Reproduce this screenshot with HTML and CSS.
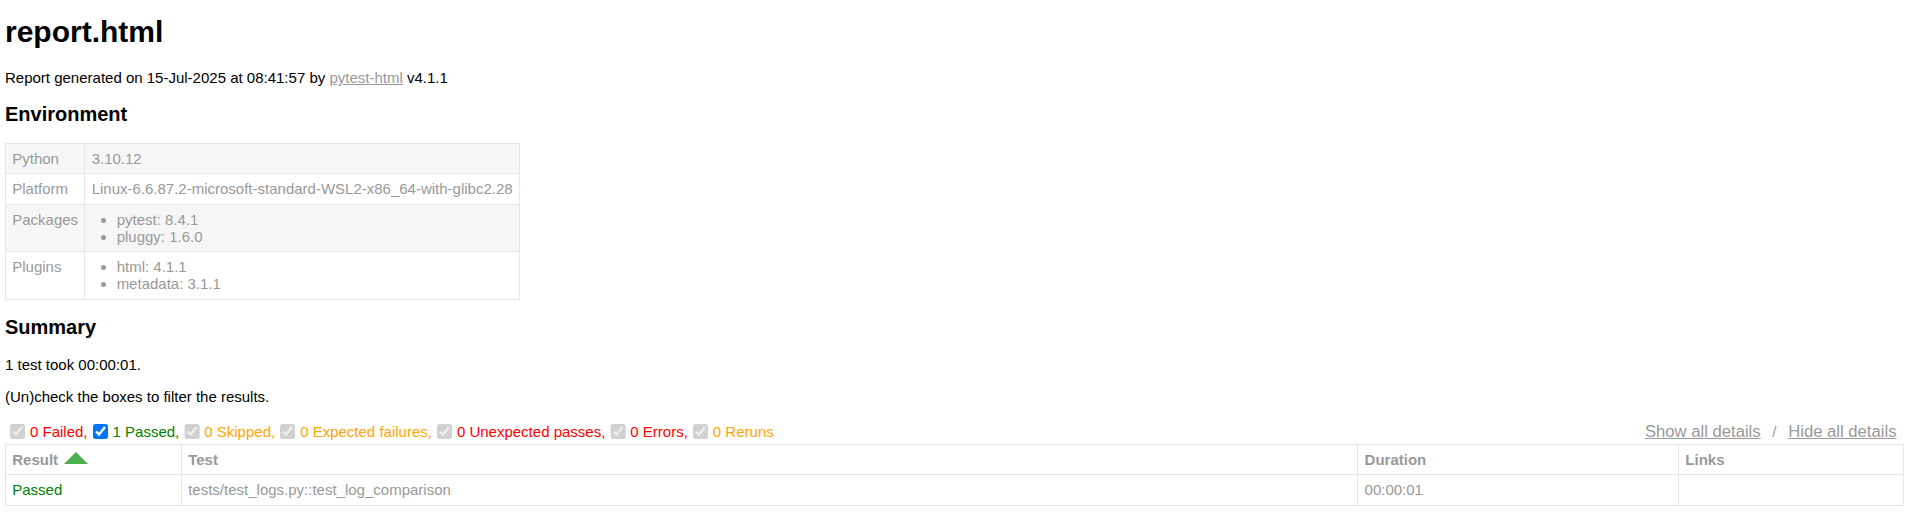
FILE: index.html
```html
<!DOCTYPE html>
<html class="root">
<head>
<meta charset="utf-8">
<title>report.html</title>
<link rel="stylesheet" href="styles.css">
</head>
<body class="page">
  <h1 class="title">report.html</h1>
  <p class="meta">Report generated on 15-Jul-2025 at 08:41:57 by <a class="link" href="#">pytest-html</a> v4.1.1</p>
  <div class="environment-header">
    <h2 class="heading">Environment</h2>
  </div>
  <table class="env">
    <tr class="env-row"><td class="env-cell">Python</td><td class="env-cell">3.10.12</td></tr>
    <tr class="env-row"><td class="env-cell">Platform</td><td class="env-cell">Linux-6.6.87.2-microsoft-standard-WSL2-x86_64-with-glibc2.28</td></tr>
    <tr class="env-row"><td class="env-cell">Packages</td><td class="env-cell"><ul class="env-list"><li>pytest: 8.4.1</li><li>pluggy: 1.6.0</li></ul></td></tr>
    <tr class="env-row"><td class="env-cell">Plugins</td><td class="env-cell"><ul class="env-list"><li>html: 4.1.1</li><li>metadata: 3.1.1</li></ul></td></tr>
  </table>
  <div class="summary">
    <h2 class="heading">Summary</h2>
    <p class="run-count">1 test took 00:00:01.</p>
    <p class="filter-note">(Un)check the boxes to filter the results.</p>
    <div class="controls">
      <div class="filters">
        <input checked class="filter" type="checkbox" disabled><span class="failed">0 Failed,</span>
        <input checked class="filter" type="checkbox"><span class="passed">1 Passed,</span>
        <input checked class="filter" type="checkbox" disabled><span class="skipped">0 Skipped,</span>
        <input checked class="filter" type="checkbox" disabled><span class="xfailed">0 Expected failures,</span>
        <input checked class="filter" type="checkbox" disabled><span class="xpassed">0 Unexpected passes,</span>
        <input checked class="filter" type="checkbox" disabled><span class="error">0 Errors,</span>
        <input checked class="filter" type="checkbox" disabled><span class="rerun">0 Reruns</span>
      </div>
      <div class="collapse">
        <button class="collapse-btn" type="button">Show all details</button>&nbsp;/&nbsp;<button class="collapse-btn" type="button">Hide all details</button>
      </div>
    </div>
  </div>
  <table class="results">
    <colgroup>
      <col class="col-w-result">
      <col class="col-w-test">
      <col class="col-w-duration">
      <col class="col-w-links">
    </colgroup>
    <thead>
      <tr>
        <th class="results-cell head sortable asc">Result</th>
        <th class="results-cell head sortable">Test</th>
        <th class="results-cell head sortable">Duration</th>
        <th class="results-cell head">Links</th>
      </tr>
    </thead>
    <tbody class="results-row">
      <tr>
        <td class="results-cell col-result">Passed</td>
        <td class="results-cell">tests/test_logs.py::test_log_comparison</td>
        <td class="results-cell">00:00:01</td>
        <td class="results-cell"></td>
      </tr>
    </tbody>
  </table>
</body>
</html>
```

FILE: styles.css
```css
.root {
  zoom: 1.25;
}

.page {
  font-family: "Liberation Sans", Helvetica, Arial, sans-serif;
  font-size: 12px;
  color: #999;
  margin: 0 3.2px 8px 4px;
  background: #fff;
}

.title {
  font-size: 24px;
  color: black;
  margin: 12.3px 0 16.08px;
}

.heading {
  font-size: 16px;
  color: black;
  margin: 13.28px 0;
}

.meta,
.run-count,
.filter-note {
  color: black;
  margin: 12px 0;
}

.link {
  color: #999;
}

.env {
  border-collapse: collapse;
}

.env-cell {
  padding: 5px;
  border: 1px solid #e6e6e6;
  vertical-align: top;
}

.env-row:nth-child(odd) {
  background-color: #f6f6f6;
}

.env-list {
  margin: 0;
  padding: 0 20px;
}

.controls {
  display: flex;
  justify-content: space-between;
}

.filters,
.collapse {
  display: flex;
  align-items: center;
}

.filter {
  margin: 3px 3px 3px 4px;
}

.collapse-btn {
  color: #999;
  border: none;
  background: none;
  cursor: pointer;
  text-decoration: underline;
  font-family: "Liberation Sans", Arial, sans-serif;
  font-size: 13.333px;
  padding: 1px 6px;
}

.passed,
.col-result {
  color: green;
}

.skipped,
.xfailed,
.rerun {
  color: orange;
}

.error,
.failed,
.xpassed {
  color: red;
}

.results {
  border-collapse: collapse;
  border: 1px solid #e6e6e6;
  color: #999;
  font-size: 12px;
  width: 100%;
}

.col-w-result {
  width: 9.27%;
}

.col-w-test {
  width: 61.98%;
}

.col-w-duration {
  width: 16.9%;
}

.col-w-links {
  width: 11.85%;
}

.results-cell {
  padding: 5px;
  border: 1px solid #e6e6e6;
  text-align: left;
}

.head {
  font-weight: bold;
}

.sortable {
  cursor: pointer;
}

.sortable.asc::after {
  content: " ";
  position: relative;
  left: 5px;
  bottom: 12.5px;
  border: 10px solid #4caf50;
  border-top: 0;
  border-left-color: transparent;
  border-right-color: transparent;
}
```
